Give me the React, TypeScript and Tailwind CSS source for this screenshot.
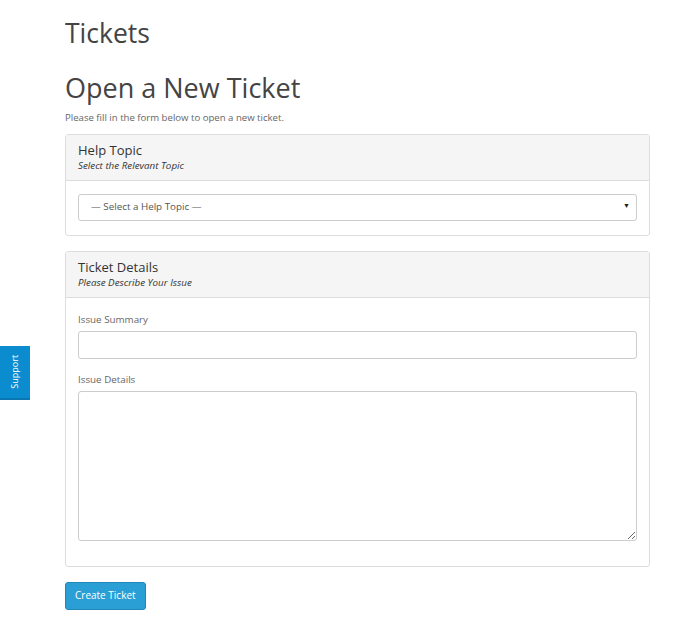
import { useState } from "react";

export default function App() {
    const [topic, setTopic] = useState("");
    const [summary, setSummary] = useState("");
    const [details, setDetails] = useState("");

    return (
        <div className="min-h-[619px] bg-white font-['Open_Sans',sans-serif] text-[#333] relative">
            {/* side support tab */}
            <div className="absolute left-0 top-[346px] w-[30px] h-[54px] bg-[#0b8ccf] border-b-2 border-[#0a77b0] flex items-center justify-center">
                <span className="-rotate-90 text-white text-[9px] whitespace-nowrap">Support</span>
            </div>

            <div className="ml-[65px] w-[585px] pt-[14px]">
                <h1 className="text-[26.5px] leading-[38px] text-[#444]">Tickets</h1>
                <h2 className="mt-[16px] text-[27px] leading-[40px] text-[#444]">Open a New Ticket</h2>
                <p className="mt-[3px] text-[9.6px] leading-[14px] text-[#666]">Please fill in the form below to open a new ticket.</p>

                <div className="mt-[9px] border border-[#ddd] rounded-[3px]">
                    <div className="bg-[#f5f5f5] border-b border-[#ddd] px-[12px] pt-[6px] pb-[8px]">
                        <div className="text-[13px] leading-[18px] text-[#333]">Help Topic</div>
                        <div className="text-[9.8px] leading-[13px] italic text-[#333]">Select the Relevant Topic</div>
                    </div>
                    <div className="px-[12px] pt-[11px] pb-[14px]">
                        <div className="relative">
                            <select
                                value={topic}
                                onChange={(e) => setTopic(e.target.value)}
                                className="appearance-none w-full h-[27px] border border-[#ccc] rounded-[3px] bg-white pl-[12px] text-[9.8px] text-[#555] outline-none"
                            >
                                <option value="">— Select a Help Topic —</option>
                                <option value="general">General Inquiry</option>
                                <option value="billing">Billing</option>
                            </select>
                            <span className="pointer-events-none absolute right-[7px] top-1/2 -translate-y-1/2 text-[7px] text-[#222]">▼</span>
                        </div>
                    </div>
                </div>

                <div className="mt-[15px] border border-[#ddd] rounded-[3px]">
                    <div className="bg-[#f5f5f5] border-b border-[#ddd] px-[12px] pt-[6px] pb-[8px]">
                        <div className="text-[13px] leading-[18px] text-[#333]">Ticket Details</div>
                        <div className="text-[9.8px] leading-[13px] italic text-[#333]">Please Describe Your Issue</div>
                    </div>
                    <div className="px-[12px] pt-[15px] pb-[25px]">
                        <label className="block text-[9.8px] leading-[14px] text-[#666]">Issue Summary</label>
                        <input
                            type="text"
                            value={summary}
                            onChange={(e) => setSummary(e.target.value)}
                            className="mt-[4px] block w-full h-[28px] border border-[#ccc] rounded-[3px] px-[8px] text-[10px] outline-none"
                        />
                        <label className="mt-[14px] block text-[9.8px] leading-[14px] text-[#666]">Issue Details</label>
                        <textarea
                            value={details}
                            onChange={(e) => setDetails(e.target.value)}
                            className="mt-[4px] block w-full h-[150px] border border-[#ccc] rounded-[3px] px-[8px] py-[4px] text-[10px] outline-none"
                        />
                    </div>
                </div>

                <button
                    type="button"
                    className="mt-[15px] h-[28px] px-[9px] bg-[#2a9fd6] border border-[#2286b6] rounded-[3px] text-white text-[10px]"
                >
                    Create Ticket
                </button>
            </div>
        </div>
    );
}
